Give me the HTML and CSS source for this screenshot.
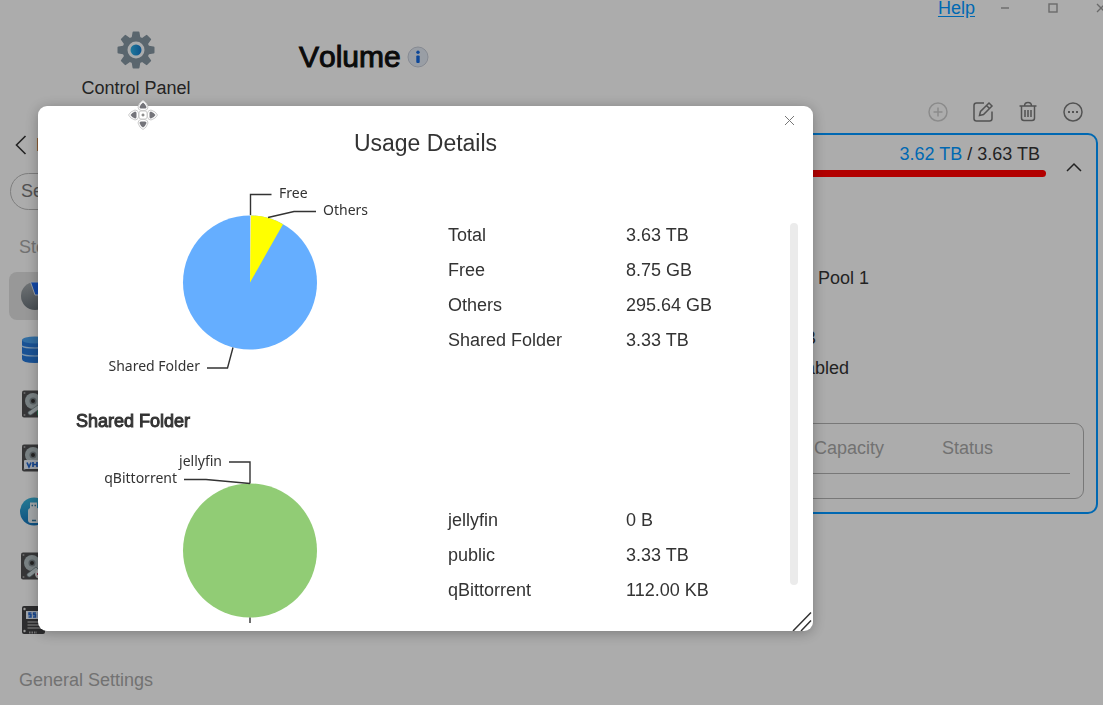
FILE: index.html
```html
<!DOCTYPE html>
<html lang="en">
<head>
<meta charset="utf-8">
<title>Volume</title>
<link rel="stylesheet" href="styles.css">
</head>
<body>
<div class="app">
  <aside class="sidebar">
    <div class="brand">
      <svg width="38" height="38" viewBox="0 0 38 38" aria-hidden="true">
        <defs><linearGradient id="hub" x2="1"><stop offset="0" stop-color="#2eaee0"/><stop offset="1" stop-color="#1478c8"/></linearGradient></defs>
        <g fill="#82929e">
          <g id="teeth"><path d="M15.500 1.500q0-1 1-1h5q1 0 1 1l1 6h-9zM15.500 36.500q0 1 1 1h5q1 0 1-1l1-6h-9z"/></g>
          <use href="#teeth" transform="rotate(45 19 19)"/><use href="#teeth" transform="rotate(90 19 19)"/><use href="#teeth" transform="rotate(135 19 19)"/>
          <circle cx="19" cy="19" r="13.500"/>
        </g>
        <circle cx="19" cy="19" r="8.500" fill="#f4f6f8"/><circle cx="19" cy="19" r="5.500" fill="url(#hub)"/>
      </svg>
      <span>Control Panel</span>
    </div>
    <button class="back" type="button"><svg width="12" height="20" viewBox="0 0 12 20"><path d="M10.500 1 1.500 10l9 9" fill="none" stroke="#333" stroke-width="1.600"/></svg><span>Back</span></button>
    <input class="search" type="search" placeholder="Search" aria-label="Search">
    <h2 class="group">Storage</h2>
    <nav class="nav">
      <button class="item selected" type="button" aria-label="Volume"><svg width="30" height="30" viewBox="0 0 30 30"><defs><linearGradient id="pg" x2="0" y2="1"><stop offset="0" stop-color="#a2a7aa"/><stop offset="1" stop-color="#687178"/></linearGradient></defs><circle cx="15" cy="15" r="14" fill="url(#pg)"/><path d="M15 14 10.500 1h14l5 13z" fill="#1c68f0" stroke="#dce4ee"/></svg></button>
      <button class="item" type="button" aria-label="Storage Pool"><svg width="30" height="30" viewBox="0 0 30 30"><path d="M2 5v19q0 4 13 4t13-4V5z" fill="#2576d6"/><ellipse cx="15" cy="5" rx="13" ry="3.500" fill="#489de8"/><path d="M2 11q2 2 13 2t13-2M2 19q2 2 13 2t13-2" fill="none" stroke="#b8d8f4" stroke-width="1.200"/></svg></button>
      <button class="item" type="button" aria-label="Disk"><svg width="30" height="30" viewBox="0 0 30 30"><g id="disk"><rect x="2" y="1.500" width="26" height="27" rx="2" fill="#4e4e50"/><circle cx="13" cy="12" r="8" fill="#aebabd"/><circle cx="13" cy="12" r="3.500" fill="#7c878c"/><circle cx="13" cy="12" r="2" fill="#333"/><circle cx="4.500" cy="4" r="1" fill="#999"/><circle cx="4.500" cy="26" r="1" fill="#999"/></g><path d="m8 23 10-7 3 3-10 7a2.500 2.500 0 0 1-3-3z" fill="#c8d5d8" stroke="#66777b" stroke-width=".7"/><circle cx="21" cy="24" r="4" fill="#349968"/></svg></button>
      <button class="item" type="button" aria-label="VHD"><svg width="30" height="30" viewBox="0 0 30 30"><use href="#disk"/><rect x="4" y="17" width="24" height="9" rx="1" fill="#e4ebf4"/><path d="m7 19.500 2 4.500 2-4.500M13 19v5M17 19v5M13 21.500h4M20 19.500v4h1.500q2-2 0-4z" fill="none" stroke="#2265cc" stroke-width="1.700"/></svg></button>
      <button class="item" type="button" aria-label="External Storage"><svg width="30" height="30" viewBox="0 0 30 30"><defs><linearGradient id="ug" x2="0" y2="1"><stop offset="0" stop-color="#38b1d5"/><stop offset="1" stop-color="#1472b8"/></linearGradient></defs><circle cx="14" cy="14.500" r="14" fill="url(#ug)"/><rect x="10" y="5.500" width="7" height="7" fill="#e8edf0"/><rect x="8" y="11" width="12" height="15" rx="3" fill="#e8edf0"/><path d="M11.500 8.500h1.500M14.500 8.500h1.500M12 23.500h4" stroke="#357da1" stroke-width="1.300"/></svg></button>
      <button class="item" type="button" aria-label="Disk Health"><svg width="30" height="30" viewBox="0 0 30 30"><use href="#disk" x="-1"/><path d="m7 23 9-7 3 3-9 7a2.500 2.500 0 0 1-3-3z" fill="#c8d5d8" stroke="#66777b" stroke-width=".7"/><circle cx="20" cy="23" r="5" fill="#eee"/><path d="M17 23h6M20 20v6" stroke="#c04868" stroke-width="2"/></svg></button>
      <button class="item" type="button" aria-label="SSD Cache"><svg width="30" height="30" viewBox="0 0 30 30"><rect x="2" y="1" width="23" height="28" rx="2" fill="#404042"/><rect x="6" y="6" width="17" height="8" fill="#e4ebf4"/><path d="M11.500 8H9v1.800h2V12H8.500M16 8h-2.500v1.800h2V12H13M18.500 8v4h2q2-2 0-4z" fill="none" stroke="#2265cc" stroke-width="1.500"/><path d="M7.500 17h16M7.500 20h16M7.500 23h16" stroke="#c8c8c8"/><path d="M9 27.500h8" stroke="#aaa" stroke-width="2" stroke-dasharray="1.500 1"/><circle cx="4.500" cy="4" r="1.200" fill="#ddd"/><circle cx="4.500" cy="26" r="1.200" fill="#ddd"/></svg></button>
    </nav>
    <h2 class="group general">General Settings</h2>
  </aside>

  <main class="main">
    <div class="windowbar">
      <a class="help" href="#help">Help</a>
      <button type="button" aria-label="Minimize"><svg width="10" height="10" viewBox="0 0 10 10"><path d="M1 5h8"/></svg></button>
      <button type="button" aria-label="Maximize"><svg width="10" height="10" viewBox="0 0 10 10"><rect x="1" y="1" width="8" height="8"/></svg></button>
      <button type="button" aria-label="Close window"><svg width="10" height="10" viewBox="0 0 10 10"><path d="m1 1 8 8M9 1 1 9"/></svg></button>
    </div>
    <header class="heading">
      <h1>Volume</h1>
      <svg width="22" height="22" viewBox="0 0 22 22" role="img" aria-label="Info"><circle cx="11" cy="11" r="10" fill="#dce2ec" stroke="#c0c6d2"/><circle cx="11" cy="6.300" r="1.700" fill="#1266dc"/><rect x="9.300" y="9.500" width="3.400" height="7.500" rx="1" fill="#1266dc"/></svg>
    </header>
    <div class="toolbar">
      <button type="button" aria-label="Create" disabled><svg width="22" height="22" viewBox="0 0 22 22"><circle cx="11" cy="11" r="9"/><path d="M11 6.500v9M6.500 11h9"/></svg></button>
      <button type="button" aria-label="Edit"><svg width="22" height="22" viewBox="0 0 22 22"><path d="M12 2H4.500Q2 2 2 4.500v13Q2 20 4.500 20h13q2.500 0 2.500-2.500v-7"/><path d="m7.500 14.500 1-4 8.500-8.500 3 3-8.500 8.500zM14.500 4.500l2.500 2.500"/></svg></button>
      <button type="button" aria-label="Delete"><svg width="22" height="22" viewBox="0 0 22 22"><path d="M2.500 5h17M4.500 5v12q0 2.500 2.500 2.500h8q2.500 0 2.500-2.500V5M7.500 5q0-3.500 3.500-3.500t3.500 3.500M8 9v7M11 9v7M14 9v7"/></svg></button>
      <button type="button" aria-label="More"><svg width="22" height="22" viewBox="0 0 22 22"><circle cx="11" cy="11" r="9"/><path d="M6 11h2M10 11h2M14 11h2" stroke-width="1.800"/></svg></button>
    </div>
    <section class="card">
      <div class="summary">
        <div class="capacity">
          <p><span class="used">3.62 TB</span> / 3.63 TB</p>
          <div class="bar"></div>
        </div>
        <button class="collapse" type="button" aria-label="Collapse"><svg width="16" height="10" viewBox="0 0 16 10"><path d="m1 9 7-7 7 7" fill="none" stroke="#333" stroke-width="1.500"/></svg></button>
      </div>
      <ul class="details">
        <li>Storage Pool 1</li>
        <li></li>
        <li>8.75 GB</li>
        <li>Not Enabled</li>
      </ul>
      <div class="disks">
        <table>
          <thead><tr><td></td><th scope="col">Capacity</th><th scope="col">Status</th></tr></thead>
        </table>
      </div>
    </section>
  </main>
</div>

<div class="overlay"></div>
<section class="dialog" role="dialog" aria-labelledby="dialog-title">
  <header class="dialog-header">
    <h2 id="dialog-title">Usage Details</h2>
  </header>
  <div class="dialog-body">
    <div class="usage">
      <svg class="chart" width="350" height="229" viewBox="0 0 350 229" role="img" aria-label="Volume usage">
        <circle cx="174" cy="109.500" r="67" fill="#65aeff"/>
        <path d="M174 109.500V42.500A67 67 0 0 1 207 51.200z" fill="#ff0"/>
        <path d="M174 109.500V42.500h1z" fill="#ddd"/>
        <path class="leader" d="M174.500 42V21.500h21M192 44.500l26-6h22M157 174.500l-5.500 20.500H131"/>
        <text x="203" y="25">Free</text>
        <text x="247" y="42">Others</text>
        <text x="124" y="198" text-anchor="end">Shared Folder</text>
      </svg>
      <dl>
        <div><dt>Total</dt><dd>3.63 TB</dd></div>
        <div><dt>Free</dt><dd>8.75 GB</dd></div>
        <div><dt>Others</dt><dd>295.64 GB</dd></div>
        <div><dt>Shared Folder</dt><dd>3.33 TB</dd></div>
      </dl>
    </div>
    <h3>Shared Folder</h3>
    <div class="usage">
      <svg class="chart" width="350" height="230" viewBox="0 0 350 230" role="img" aria-label="Shared folder usage">
        <circle cx="174" cy="110.500" r="67" fill="#91cc75"/>
        <path class="leader" d="M174 43.500V22h-21M174 43.500 130 39.500h-22M174 177.500v21"/>
        <text x="146" y="26" text-anchor="end">jellyfin</text>
        <text x="101" y="43" text-anchor="end">qBittorrent</text>
      </svg>
      <dl>
        <div><dt>jellyfin</dt><dd>0 B</dd></div>
        <div><dt>public</dt><dd>3.33 TB</dd></div>
        <div><dt>qBittorrent</dt><dd>112.00 KB</dd></div>
      </dl>
    </div>
  </div>
  <button class="close" type="button" aria-label="Close"><svg width="11" height="11" viewBox="0 0 11 11"><path d="m1 1 9 9M10 1 1 10" stroke="#777" stroke-width="1"/></svg></button>
  <div class="scrollbar"></div>
  <svg class="resize" width="22" height="20" viewBox="0 0 22 20" aria-hidden="true"><path d="M3 20 21 1.500M11 20 21 9.500" stroke="#333" stroke-width="1.500"/></svg>
  <svg class="move" width="32" height="32" viewBox="0 0 32 32" aria-hidden="true">
    <g fill="#fff" stroke="#ccc" stroke-width="1"><g id="arm"><path d="M16 1.500q3.500 1.500 5 6.500 0 3-3 3.500h-4q-3-.5-3-3.500 1.500-5 5-6.500z"/><path d="M16 3.500q2.500 1.500 3.500 4.500 0 1.500-1.500 1.500h-4q-1.500 0-1.500-1.500 1-3 3.500-4.500z" fill="#74747a" stroke="none"/></g>
    <use href="#arm" transform="rotate(90 16 16)"/><use href="#arm" transform="rotate(180 16 16)"/><use href="#arm" transform="rotate(270 16 16)"/><rect x="12" y="12" width="8" height="8" rx="2"/></g><path d="M14.500 16h3M16 14.500v3" stroke="#666"/>
  </svg>
</section>
</body>
</html>
```
FILE: styles.css
```css
* { box-sizing: border-box; }

body {
  margin: 0;
  overflow: hidden;
  background: #f7f7f7;
  color: #333;
  font: 18px/22px "Liberation Sans", Arial, sans-serif;
}

h1, h2, h3, p, ul, dl, dd { margin: 0; padding: 0; font-weight: 400; }
svg { display: block; flex: none; }
button {
  display: flex;
  align-items: center;
  justify-content: center;
  border: 0;
  padding: 0;
  background: none;
  color: inherit;
  font: inherit;
}

.app {
  display: grid;
  grid-template-columns: 272px 1fr;
  height: 100vh;
  overflow: hidden;
}

/* Sidebar */
.sidebar { display: flex; flex-direction: column; padding: 31px 9px 0; }
.brand { display: flex; flex-direction: column; align-items: center; gap: 8px; }
.back { align-self: flex-start; gap: 9px; height: 24px; margin: 34px 0 16px 6px; }
.search {
  height: 37px;
  margin: 0 1px;
  padding: 0 10px;
  border: 1px solid #b4b4b4;
  border-radius: 19px;
  background: none;
  font: inherit;
}
.search::placeholder { color: #757575; opacity: 1; }
.group { margin: 26px 10px 14px; color: #a4a4a4; font-size: 18px; line-height: 22px; }
.nav { display: flex; flex-direction: column; gap: 6px; }
.item { justify-content: flex-start; height: 48px; padding-left: 11px; border-radius: 8px; }
.item.selected { background: #dadada; }
.general { margin-top: 25px; }

/* Main area */
.main { display: flex; flex-direction: column; min-width: 0; padding: 0 5px 0 27px; }
.windowbar { display: flex; justify-content: flex-end; align-items: center; height: 16px; margin-right: -27px; }
.windowbar button { width: 48px; height: 16px; }
.windowbar svg { fill: none; stroke: #999; stroke-width: 1.4; }
.help { margin-right: 6px; color: #0096ff; line-height: 16px; text-underline-offset: 2px; }
.heading { display: flex; align-items: center; gap: 6px; height: 82px; }
.heading h1 { color: #111; font-size: 30px; line-height: 36px; font-kerning: none; -webkit-text-stroke: 1px #111; }
.toolbar { display: flex; justify-content: flex-end; padding-right: 3px; }
.toolbar button { width: 45px; height: 27px; }
.toolbar svg { fill: none; stroke: #777; stroke-width: 1.5; }
.toolbar button:disabled svg { stroke: #c8c8c8; }

.card { margin-top: 8px; padding: 8px 12px 13px; border: 2px solid #0096ff; border-radius: 10px; }
.summary { display: grid; grid-template-columns: 1fr 38px; }
.capacity p { padding-right: 6px; text-align: right; }
.used { color: #0096ff; }
.bar { height: 7px; margin-top: 5px; border-radius: 4px; background: #f00; }
.collapse { justify-content: flex-end; padding: 14px 2px 0 0; }
.details { margin-top: 86px; padding-left: 437px; list-style: none; line-height: 30px; }
.details li { height: 30px; }
.disks { height: 76px; margin-top: 40px; padding: 0 13px; border: 1px solid #adadad; border-radius: 9px; }
.disks table { width: 100%; table-layout: fixed; border-collapse: collapse; }
.disks th, .disks td { width: 128px; height: 49px; padding: 0; border-bottom: 1px solid #adadad; color: #a4a4a4; font-weight: 400; text-align: left; }
.disks td { width: auto; }

/* Dialog */
.overlay { position: fixed; inset: 0; background: rgba(0, 0, 0, .3); }
.dialog {
  position: fixed;
  inset: 106px 290px 74px 38px;
  display: flex;
  flex-direction: column;
  border-radius: 9px;
  background: #fff;
  box-shadow: 0 2px 14px rgba(0, 0, 0, .3);
}
.dialog-header { display: flex; justify-content: center; padding: 22px 0 15px; }
.dialog-header h2 { font-size: 23px; line-height: 30px; }
.dialog-body { flex: 1; min-height: 0; margin-bottom: 8px; padding: 0 38px; overflow: hidden; }
.dialog-body h3 { font-size: 18px; line-height: 38px; -webkit-text-stroke: 1px #333; }
.usage { display: grid; grid-template-columns: 372px 1fr; align-items: center; }
.usage dl > div { display: grid; grid-template-columns: 178px 1fr; line-height: 35px; }
.chart text { fill: #333; font: 14px "Noto Sans", "Open Sans", sans-serif; }
.leader { fill: none; stroke: #333; stroke-width: 1.4; }
.close { position: absolute; top: 4px; right: 14px; width: 20px; height: 20px; }
.scrollbar { position: absolute; top: 117px; right: 15px; bottom: 46px; width: 8px; border-radius: 4px; background: #ebebeb; }
.resize { position: absolute; right: 1px; bottom: 0; }
.move { position: absolute; top: -7px; left: 89px; }
```
